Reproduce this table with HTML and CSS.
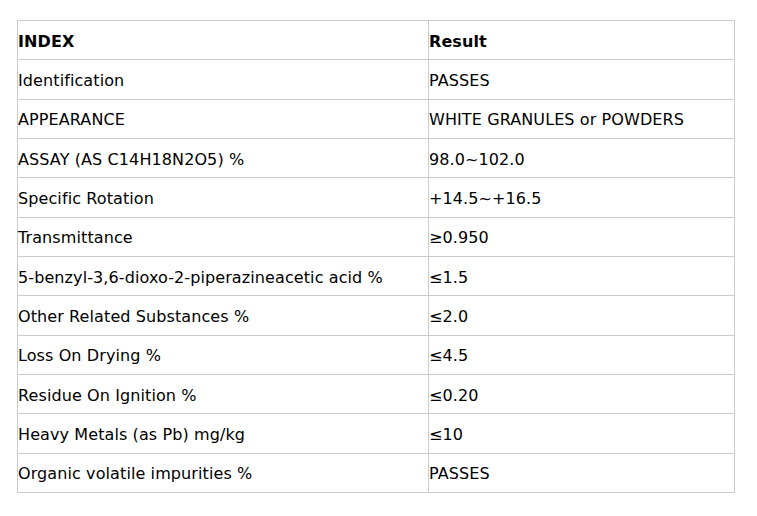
FILE: index.html
```html
<!DOCTYPE html>
<html>
<head>
<meta charset="utf-8">
<link rel="stylesheet" href="styles.css">
</head>
<body>
<table class="spec">
  <tr class="head"><td class="c1">INDEX</td><td class="c2">Result</td></tr>
  <tr><td>Identification</td><td>PASSES</td></tr>
  <tr><td>APPEARANCE</td><td>WHITE GRANULES or POWDERS</td></tr>
  <tr><td>ASSAY (AS C14H18N2O5) %</td><td>98.0~102.0</td></tr>
  <tr><td>Specific Rotation</td><td>+14.5~+16.5</td></tr>
  <tr><td>Transmittance</td><td>≥0.950</td></tr>
  <tr><td>5-benzyl-3,6-dioxo-2-piperazineacetic acid %</td><td>≤1.5</td></tr>
  <tr><td>Other Related Substances %</td><td>≤2.0</td></tr>
  <tr><td>Loss On Drying %</td><td>≤4.5</td></tr>
  <tr><td>Residue On Ignition %</td><td>≤0.20</td></tr>
  <tr><td>Heavy Metals (as Pb) mg/kg</td><td>≤10</td></tr>
  <tr><td>Organic volatile impurities %</td><td>PASSES</td></tr>
</table>
</body>
</html>
```
FILE: styles.css
```css
html, body {
  margin: 0;
  padding: 0;
  background: #fff;
}
body {
  padding: 20px 0 0 17px;
  font-family: "DejaVu Sans", sans-serif;
  font-size: 16px;
  letter-spacing: 0.1px;
  color: #000;
}
.spec {
  border-collapse: collapse;
  width: 718px;
  table-layout: fixed;
}
.spec td {
  border: 1px solid #cccccc;
  height: 39.33px;
  padding: 2px 0 0 0;
  vertical-align: middle;
  box-sizing: border-box;
  white-space: nowrap;
}
.spec .c1 {
  width: 411px;
}
.head td {
  font-weight: bold;
}
```
